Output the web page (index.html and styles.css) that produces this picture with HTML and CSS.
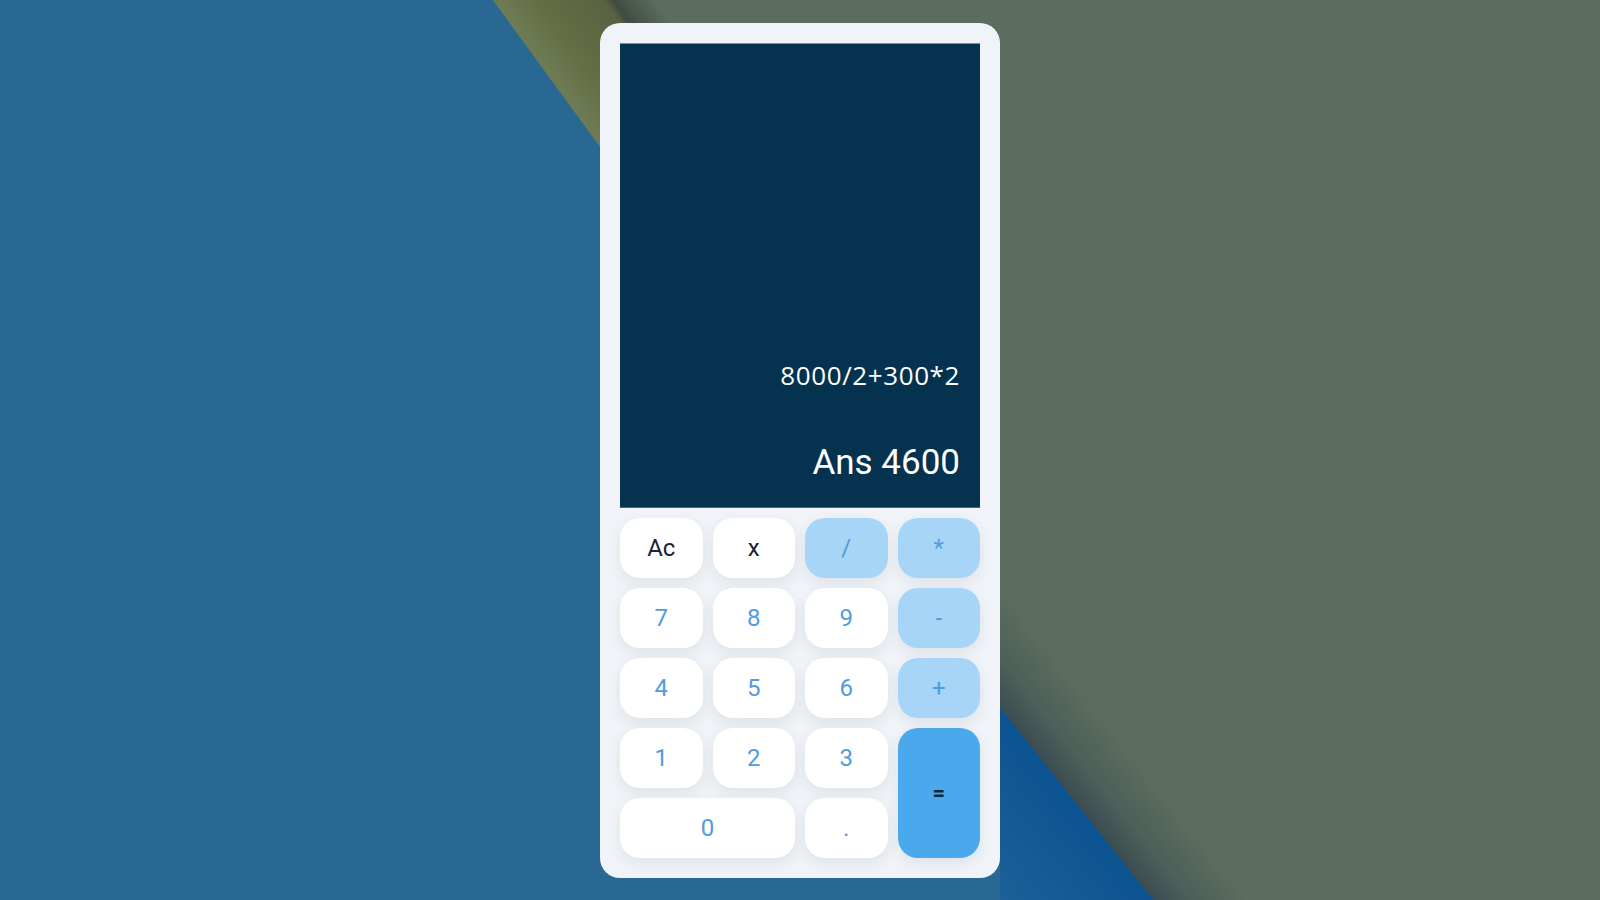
FILE: index.html
```html
<!DOCTYPE html>
<html lang="en">
<head>
<meta charset="utf-8">
<title>Calculator</title>
<link rel="stylesheet" href="styles.css">
</head>
<body>
  <div class="calculator">
    <div class="display">
      <div class="expression">8000/2+300*2</div>
      <div class="result">Ans 4600</div>
    </div>
    <div class="keys">
      <button class="key key-fn">Ac</button>
      <button class="key key-fn">x</button>
      <button class="key key-op">/</button>
      <button class="key key-op">*</button>
      <button class="key">7</button>
      <button class="key">8</button>
      <button class="key">9</button>
      <button class="key key-op">-</button>
      <button class="key">4</button>
      <button class="key">5</button>
      <button class="key">6</button>
      <button class="key key-op">+</button>
      <button class="key">1</button>
      <button class="key">2</button>
      <button class="key">3</button>
      <button class="key key-eq">=</button>
      <button class="key key-zero">0</button>
      <button class="key">.</button>
    </div>
  </div>
</body>
</html>
```
FILE: styles.css
```css
html, body {
  margin: 0;
  padding: 0;
  height: 100%;
}

body {
  display: flex;
  justify-content: center;
  align-items: center;
  font-family: Roboto, "Liberation Sans", Arial, sans-serif;
  background:
    linear-gradient(53.9deg, rgba(0,0,0,0) 77.4%, #6e7c55 77.5%, #646d45 82.5%, #5a6140 89.5%, #3f4b42 90.5%, rgba(91,109,94,0) 95%) 0 0 / 700px 300px no-repeat,
    linear-gradient(51.5deg, #1d6099 0%, #145a96 8%, #0c5391 16.6%, #3a4d53 16.7%, #4d6059 21%, #5b6d5e 27%) 1000px 500px / 600px 400px no-repeat,
    linear-gradient(53.9deg, #286892 50.95%, #5b6d5e 50.95%);
}

.calculator {
  width: 400px;
  height: 855px;
  box-sizing: border-box;
  padding: 20px;
  background: #f0f4f8;
  border-radius: 20px;
  display: flex;
  flex-direction: column;
  gap: 10px;
}

.display {
  height: 465px;
  box-sizing: border-box;
  background: #05324f;
  border-top: 1px solid #7d8fa3;
  border-bottom: 1px solid #41698a;
  display: flex;
  flex-direction: column;
  justify-content: flex-end;
  align-items: flex-end;
  padding: 0 20px 27px;
  color: #ffffff;
}

.expression {
  font-family: "Open Sans", "Liberation Sans", sans-serif;
  font-size: 26px;
  line-height: 1;
  letter-spacing: 0.6px;
  margin-bottom: 57px;
}

.result {
  font-family: Roboto, sans-serif;
  font-size: 35px;
  line-height: 1;
}

.keys {
  flex: 1;
  display: grid;
  grid-template-columns: repeat(4, 1fr);
  grid-template-rows: repeat(5, 60px);
  gap: 10px;
}

.key {
  border: none;
  margin: 0;
  padding: 0;
  border-radius: 20px;
  background: #ffffff;
  color: #4d9de0;
  font-family: Roboto, sans-serif;
  font-size: 24px;
  box-shadow: 0 5px 14px rgba(40, 50, 70, 0.09);
  display: flex;
  align-items: center;
  justify-content: center;
}

.key-fn {
  color: #1c2333;
}

.key-op {
  background: #a6d5f8;
  color: #4d9de0;
}

.key-eq {
  grid-row: span 2;
  background: #4aa8ec;
  color: #0b2742;
  font-weight: 700;
  font-size: 22px;
}

.key-zero {
  grid-column: span 2;
}
```
